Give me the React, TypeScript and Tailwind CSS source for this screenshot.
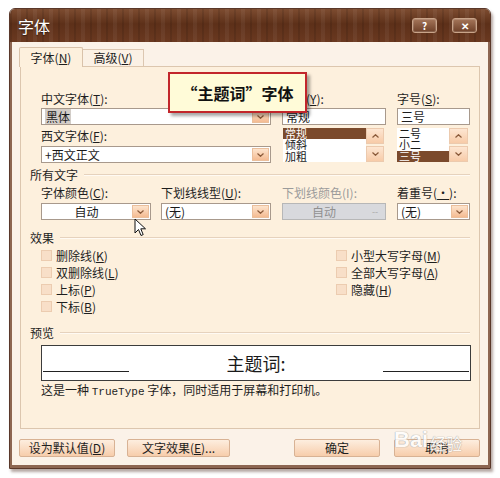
import React from 'react';

const font = "font-['Noto_Sans_CJK_SC','Noto_Sans',sans-serif]";

function Chevron({ up }: { up?: boolean }) {
  return (
    <svg width="7" height="4" viewBox="0 0 7 4">
      <path
        d={up ? 'M0.5 3.5 L3.5 0.7 L6.5 3.5' : 'M0.5 0.5 L3.5 3.3 L6.5 0.5'}
        fill="none"
        stroke="#8a5a3a"
        strokeWidth="1.2"
      />
    </svg>
  );
}

function Label({ children, className = '', disabled }: { children: React.ReactNode; className?: string; disabled?: boolean }) {
  return (
    <div className={`h-[14px] leading-[14px] whitespace-nowrap ${disabled ? 'text-[#9b9b9b]' : 'text-[#1e1e1e]'} ${className}`}>
      {children}
    </div>
  );
}

function Combo({
  value,
  className = '',
  center,
  disabled,
  highlight,
}: {
  value: string;
  className?: string;
  center?: boolean;
  disabled?: boolean;
  highlight?: boolean;
}) {
  return (
    <div
      className={`h-[17px] border flex items-stretch ${
        disabled ? 'border-[#b7b7b7] bg-[#d8d9dd] text-[#909090]' : 'border-[#a8998c] bg-white text-[#1a1a1a]'
      } ${className}`}
    >
      <div className={`flex-1 flex items-center px-[3px] leading-[15px] whitespace-nowrap ${center ? 'justify-center' : ''}`}>
        {highlight ? <span className="bg-[#d3cdc8] px-px">{value}</span> : value}
      </div>
      {disabled ? (
        <div className="w-[18px] m-px flex items-center justify-center text-[9px] text-[#a9a9a9]">--</div>
      ) : (
        <div className="w-[17px] m-px flex items-center justify-center border border-[#ebbf9c] bg-gradient-to-b from-[#fde4cd] to-[#f4bb92]">
          <Chevron />
        </div>
      )}
    </div>
  );
}

function TextBox({ value, className = '' }: { value: string; className?: string }) {
  return (
    <div className={`h-[17px] border border-[#a8998c] bg-white flex items-center px-[3px] leading-[15px] ${className}`}>
      {value}
    </div>
  );
}

function ScrollBtn({ up }: { up?: boolean }) {
  return (
    <div className="h-[16px] flex items-center justify-center border border-[#eccaae] bg-gradient-to-b from-[#fde6d2] to-[#f7cba8]">
      <Chevron up={up} />
    </div>
  );
}

function ListBox({ items, sel, className = '', scrollW }: { items: string[]; sel: number; className?: string; scrollW: string }) {
  return (
    <div className={`h-[34px] flex ${className}`}>
      <div className="flex-1 bg-white flex flex-col">
        {items.map((it, i) => (
          <div
            key={it}
            className={`h-[11.33px] text-[11px] leading-[11px] px-[2px] ${i === sel ? 'bg-[#7b4a2c] text-white' : 'text-[#1a1a1a]'}`}
          >
            {it}
          </div>
        ))}
      </div>
      <div className={`${scrollW} flex flex-col justify-between`}>
        <ScrollBtn up />
        <ScrollBtn />
      </div>
    </div>
  );
}

function Section({ title, className = '' }: { title: string; className?: string }) {
  return (
    <div className={`flex items-center h-[14px] gap-[6px] ${className}`}>
      <span className="leading-[14px]">{title}</span>
      <div className="flex-1 border-t border-[#e6d2bd] border-b border-b-[#fffaf3]" />
    </div>
  );
}

function Check({ children }: { children: React.ReactNode }) {
  return (
    <div className="h-[17px] flex items-center gap-[4px]">
      <div className="w-[11px] h-[11px] border border-[#ecccb0] bg-[#f8dfc8]" />
      <span className="leading-[14px] whitespace-nowrap">{children}</span>
    </div>
  );
}

function Btn({ children, className = '' }: { children: React.ReactNode; className?: string }) {
  return (
    <div
      className={`h-[18px] rounded-[2px] border border-[#d8b294] bg-gradient-to-b from-[#fdeedf] to-[#f7cdab] flex items-center justify-center whitespace-nowrap ${className}`}
    >
      {children}
    </div>
  );
}

function TitleBtn({ children }: { children: React.ReactNode }) {
  return (
    <div className="w-[25px] h-[15px] rounded-[3px] border border-[#c9a489] bg-gradient-to-b from-[#a5765a] to-[#6f4129] flex items-center justify-center text-white text-[10px] font-bold leading-none shadow-[inset_0_0_0_1px_rgba(255,255,255,0.15)]">
      {children}
    </div>
  );
}

export default function App() {
  return (
    <div className={`w-[500px] h-[478px] bg-white pt-[8px] pl-[9px] text-[12px] text-[#1e1e1e] ${font}`}>
      <div className="relative w-[482px] h-[461px] flex flex-col rounded-t-[6px] border border-[#5a382a] shadow-[2px_3px_3px_rgba(90,60,50,0.45)]">
        {/* title bar */}
        <div className="h-[33px] flex-none rounded-t-[5px] flex items-center justify-between pl-[8px] pr-[13px] bg-[image:repeating-linear-gradient(90deg,rgba(0,0,0,0.10)_0px,rgba(0,0,0,0.10)_2px,transparent_2px,transparent_7px,rgba(255,255,255,0.05)_7px,rgba(255,255,255,0.05)_11px,transparent_11px,transparent_16px),linear-gradient(180deg,#7d4c30_0%,#5d3019_45%,#6a3920_100%)]">
          <span className="text-white text-[16px] leading-none [text-shadow:0_1px_1px_rgba(0,0,0,0.5)]">字体</span>
          <div className="flex gap-[15px]">
            <TitleBtn>?</TitleBtn>
            <TitleBtn>✕</TitleBtn>
          </div>
        </div>

        {/* body */}
        <div className="flex-1 flex flex-col bg-[#fbf2e8] border-x-[2px] border-b-[3px] border-[#8d6652] px-[8px] pt-[5px]">
          {/* tabs */}
          <div className="flex items-end -ml-px relative z-10">
            <div className="h-[20px] w-[64px] border border-b-0 border-[#d9c2aa] bg-[#fdf0dd] flex items-center justify-center rounded-t-[2px]">
              字体(<u>N</u>)
            </div>
            <div className="h-[17px] w-[61px] mb-px border border-b-0 border-l-0 border-[#dcc7b1] bg-[#fbf1e5] flex items-center justify-center">
              高级(<u>V</u>)
            </div>
          </div>

          {/* panel */}
          <div className="h-[363px] flex-none -mt-px border border-[#dcc6ae] bg-[#fdf0dd] px-[9px] pt-[25px]">
            {/* fonts */}
            <div className="ml-[11px] flex gap-[11px]">
              <div className="w-[230px] flex flex-col">
                <Label>中文字体(<u>T</u>):</Label>
                <Combo className="mt-[2px]" value="黑体" highlight />
                <Label className="mt-[4px]">西文字体(<u>F</u>):</Label>
                <Combo className="mt-[3px]" value="+西文正文" />
              </div>
              <div className="w-[104px] flex flex-col">
                <Label>字形(<u>Y</u>):</Label>
                <TextBox className="mt-[2px]" value="常规" />
                <ListBox className="mt-[3px] pl-px mr-[2px]" items={['常规', '倾斜', '加粗']} sel={0} scrollW="w-[18px]" />
              </div>
              <div className="w-[73px] flex flex-col">
                <Label>字号(<u>S</u>):</Label>
                <TextBox className="mt-[2px]" value="三号" />
                <ListBox className="mt-[3px] mr-[2px]" items={['二号', '小二', '三号']} sel={2} scrollW="w-[19px]" />
              </div>
            </div>

            {/* all text */}
            <Section className="mt-[5px]" title="所有文字" />
            <div className="ml-[11px] mt-[4px] flex">
              <div className="w-[110px] flex flex-col">
                <Label>字体颜色(<u>C</u>):</Label>
                <Combo className="mt-[3px]" value="自动" center />
              </div>
              <div className="w-[110px] ml-[10px] flex flex-col">
                <Label>下划线线型(<u>U</u>):</Label>
                <Combo className="mt-[3px]" value="(无)" />
              </div>
              <div className="w-[104px] ml-[11px] flex flex-col">
                <Label disabled>下划线颜色(I):</Label>
                <Combo className="mt-[3px]" value="自动" center disabled />
              </div>
              <div className="w-[73px] ml-[11px] flex flex-col">
                <Label>着重号(<u>·</u>):</Label>
                <Combo className="mt-[3px]" value="(无)" />
              </div>
            </div>

            {/* effects */}
            <Section className="mt-[11px]" title="效果" />
            <div className="ml-[11px] mt-[2px] flex">
              <div className="w-[295px] flex flex-col">
                <Check>删除线(<u>K</u>)</Check>
                <Check>双删除线(<u>L</u>)</Check>
                <Check>上标(<u>P</u>)</Check>
                <Check>下标(<u>B</u>)</Check>
              </div>
              <div className="flex flex-col">
                <Check>小型大写字母(<u>M</u>)</Check>
                <Check>全部大写字母(<u>A</u>)</Check>
                <Check>隐藏(<u>H</u>)</Check>
              </div>
            </div>

            {/* preview */}
            <Section className="mt-[11px]" title="预览" />
            <div className="ml-[11px] mt-[5px] w-[430px] h-[36px] border border-[#3c3c3c] bg-white flex items-center px-[1px]">
              <div className="w-[86px] h-px bg-[#222] self-end mb-[8px]" />
              <div className="flex-1 text-center text-[18px] leading-none text-[#1a1a1a]">主题词:</div>
              <div className="w-[86px] h-px bg-[#222] self-end mb-[8px]" />
            </div>
            <div className="ml-[11px] mt-[2px] h-[14px] leading-[14px] whitespace-nowrap">
              这是一种 <span className="font-['Liberation_Mono',monospace] text-[11px]">TrueType</span> 字体，同时适用于屏幕和打印机。
            </div>
          </div>

          {/* buttons */}
          <div className="mt-[10px] flex items-center">
            <Btn className="w-[96px] -ml-px">设为默认值(<u>D</u>)</Btn>
            <Btn className="w-[103px] ml-[12px]">文字效果(<u>E</u>)...</Btn>
            <Btn className="w-[86px] ml-auto">确定</Btn>
            <Btn className="w-[86px] ml-[14px]">取消</Btn>
          </div>
        </div>

        {/* tooltip */}
        <div className="absolute left-[158px] top-[63px] w-[139px] h-[41px] border-2 border-[#c2262b] bg-[#fffbd8] flex items-center justify-center text-[16px] font-bold text-[#111] shadow-[3px_3px_3px_rgba(0,0,0,0.35)] z-20">
          “主题词”字体
        </div>

        {/* cursor */}
        <svg className="absolute left-[124px] top-[209px] z-20" width="13" height="19" viewBox="0 0 13 19">
          <path d="M1 1 L1 15 L4.5 11.5 L7 17.5 L9.2 16.6 L6.8 10.8 L11.5 10.8 Z" fill="#fff" stroke="#111" strokeWidth="1" strokeLinejoin="round" />
        </svg>

        {/* watermark */}
        <div className="absolute left-[384px] top-[420px] z-20 flex items-end gap-[2px] opacity-80 pointer-events-none">
          <span className="font-['Liberation_Sans',sans-serif] font-bold text-[22px] leading-none text-white [text-shadow:0_0_1px_#9a9a9a,0_0_1px_#9a9a9a]">Bai</span>
          <span className="text-[16px] leading-none text-white [text-shadow:0_0_1px_#9a9a9a,0_0_1px_#9a9a9a]">经验</span>
        </div>
      </div>
    </div>
  );
}
